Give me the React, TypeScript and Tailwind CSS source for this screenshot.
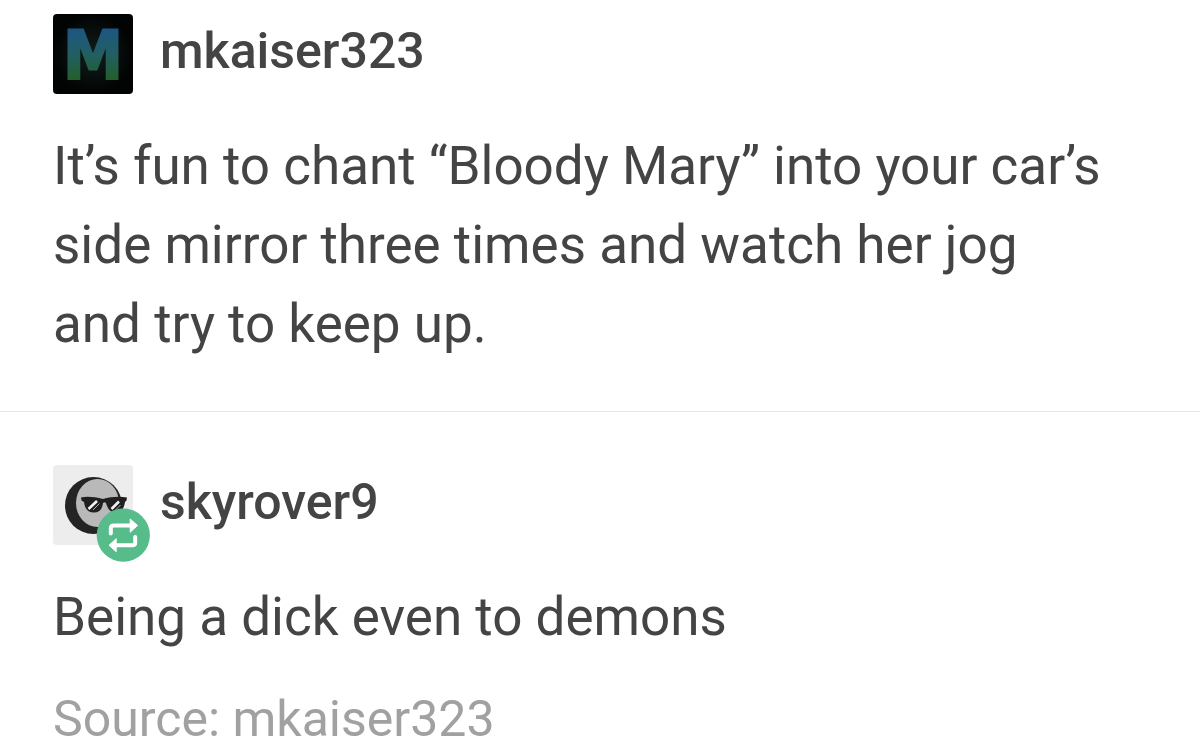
import React from "react";

type Post = {
  key: string;
  author: string;
  body: string;
  source?: string;
  avatar: React.ReactNode;
  reblog: boolean;
  spacing: string; // Tailwind padding and border classes
};

const POSTS: Post[] = [
  {
    key: "original",
    author: "mkaiser323",
    body: "It’s fun to chant “Bloody Mary” into your car’s side mirror three times and watch her jog and try to keep up.",
    avatar: <LetterAvatar />,
    reblog: false,
    spacing: "pt-[14px] pb-[47px] border-b border-[#e6e6e6]",
  },
  {
    key: "reblog",
    author: "skyrover9",
    body: "Being a dick even to demons",
    source: "mkaiser323",
    avatar: <ShadesAvatar />,
    reblog: true,
    spacing: "pt-[53px]",
  },
];

function LetterAvatar() {
  return (
    <svg className="size-20 overflow-visible" viewBox="0 0 80 80" aria-hidden="true">
      <defs>
        <radialGradient id="glow">
          <stop offset="0" stopColor="#101e1c" />
          <stop offset="1" stopColor="#020303" />
        </radialGradient>
        <linearGradient id="letter" gradientUnits="userSpaceOnUse" x1="0" y1="14" x2="0" y2="66">
          <stop offset="0" stopColor="#1c5684" />
          <stop offset="0.5" stopColor="#225f62" />
          <stop offset="1" stopColor="#235f2a" />
        </linearGradient>
      </defs>
      <rect width="80" height="80" rx="4" fill="url(#glow)" />
      <text
        x="40"
        y="65"
        textAnchor="middle"
        fill="url(#letter)"
        stroke="url(#letter)"
        strokeWidth="2"
        className="font-['DejaVu_Sans_Condensed','DejaVu_Sans',sans-serif] text-[67px] leading-none font-bold"
      >
        M
      </text>
    </svg>
  );
}

function ShadesAvatar() {
  return (
    <svg className="size-20 rounded" viewBox="0 0 80 80" aria-hidden="true">
      <rect width="80" height="80" fill="#ededed" />
      <circle cx="40.5" cy="40.5" r="28.5" fill="#242424" />
      <ellipse cx="44.5" cy="38" rx="21.5" ry="24" fill="#b9b9b9" />
      <path
        d="M28 32.5C34 31 42 32 50 34C57 32 66 31 74 32.5L73.5 35.5L72 37C71 43 69 47 64 47.5C58 48 55 45 53 38Q51.5 36.5 50 38C49 44 47 47.5 41 47.5C35 47.5 32 44 31 37L28.5 35.5Z"
        fill="#202020"
      />
      <path d="M35.5 44L44 36M58.5 44L66 36.5" stroke="#f2f2f2" strokeWidth="2.6" />
      <path d="M40 45L46.5 38.5M62.5 45L67.5 40" stroke="#a8a8a8" strokeWidth="1" />
    </svg>
  );
}

function ReblogBadge() {
  return (
    <svg
      className="absolute -right-[17px] -bottom-[17px] size-[54px]"
      viewBox="0 0 54 54"
      aria-hidden="true"
    >
      <circle cx="27.3" cy="27.2" r="26.6" fill="#56bc8a" />
      <g fill="none" stroke="#fff" strokeWidth="4" strokeLinecap="round">
        <path d="M14.8 25.5V20.5Q14.8 17.5 17.8 17.500H35" />
        <path d="M39.200 29V34.500Q39.200 37.300 36.500 37.300H19" />
      </g>
      <path
        d="M34.200 11L41.600 17.500L34.200 24.200ZM20.200 30.700L13 37.300L20.200 43.700Z"
        fill="#fff"
        stroke="#fff"
        strokeLinejoin="round"
      />
    </svg>
  );
}

export default function App() {
  return (
    <main className="bg-white font-[Roboto,sans-serif] text-[#444]">
      {POSTS.map((p) => (
        <article key={p.key} className={`px-[53px] ${p.spacing}`}>
          <header className="flex items-start gap-[27px]">
            <div className="relative">
              {p.avatar}
              {p.reblog && <ReblogBadge />}
            </div>
            <a href="#" className="pt-[5px] text-[50px] leading-16 font-medium">
              {p.author}
            </a>
          </header>
          <p className="mt-[33px] pr-9 text-[53px] leading-[79px]">{p.body}</p>
          {p.source && (
            <p className="mt-8 text-[50px] leading-15 text-[#a1a1a1]">
              Source: <a href="#">{p.source}</a>
            </p>
          )}
        </article>
      ))}
    </main>
  );
}
